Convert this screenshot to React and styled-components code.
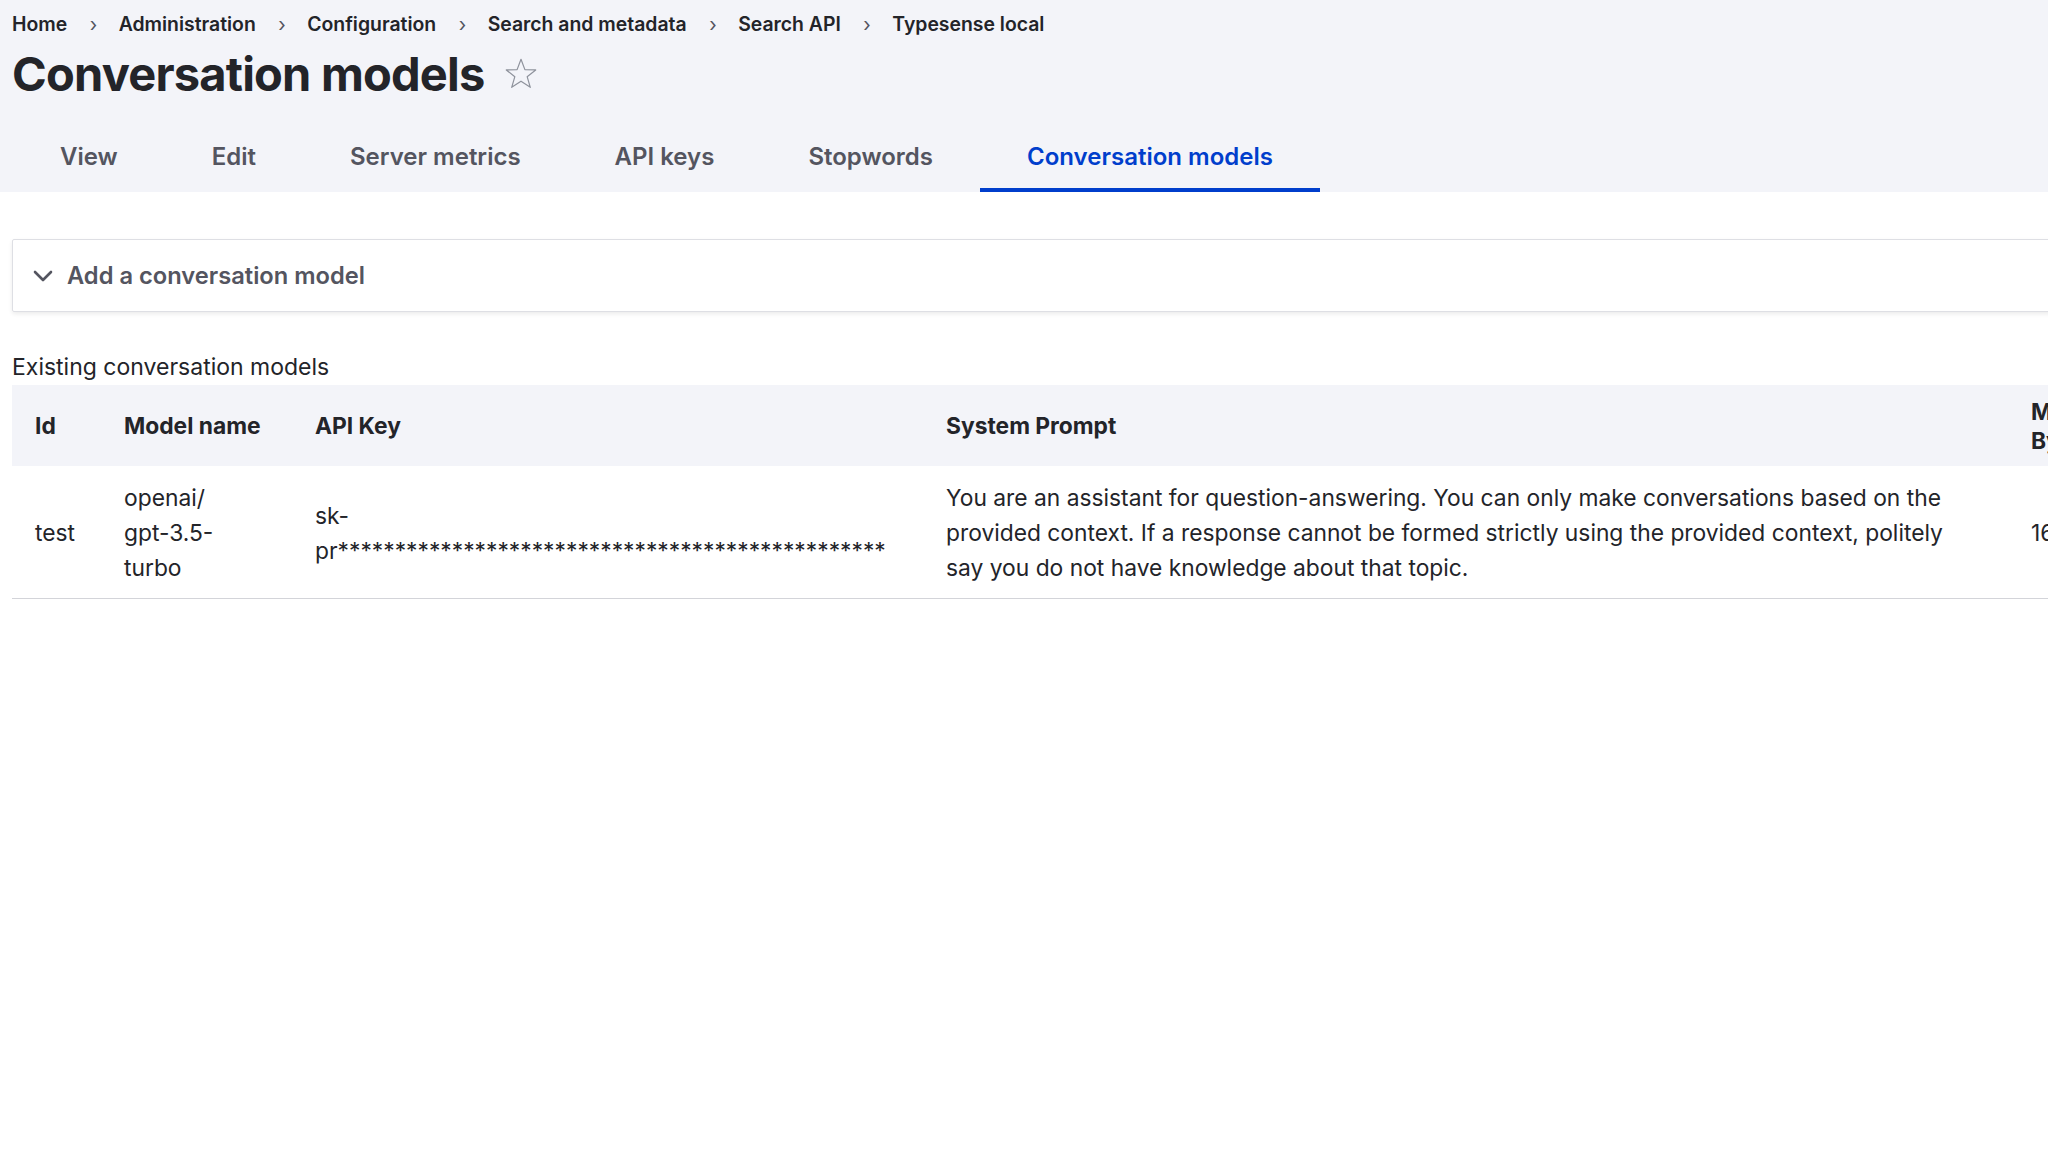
import React from 'react'
import styled, { createGlobalStyle } from 'styled-components'

const GlobalStyle = createGlobalStyle`
	html, body {
		margin: 0;
		padding: 0;
		background: #ffffff;
		overflow: hidden;
	}
	body {
		font-family: Inter, "Noto Sans", "Liberation Sans", sans-serif;
		color: #232429;
	}
`

const Page = styled.div`
	width: 2048px;
	height: 1152px;
	overflow: hidden;
	background: #ffffff;
`

const Header = styled.header`
	background: #f3f4f9;
	padding: 12px 0 0 12px;
	height: 192px;
	box-sizing: border-box;
`

const Crumbs = styled.nav`
	display: flex;
	align-items: center;
	font-size: 19.4px;
	line-height: 24px;
	font-weight: 600;
	color: #232429;
`

const Sep = styled.span`
	color: #545560;
	font-weight: 400;
	padding: 0 21.5px 0 22.5px;
`

const TitleRow = styled.div`
	display: flex;
	align-items: center;
	gap: 18px;
	margin-top: 10px;
`

const Title = styled.h1`
	margin: 0;
	font-size: 47px;
	line-height: 56px;
	font-weight: 700;
	letter-spacing: -0.8px;
	color: #232429;
`

const Tabs = styled.ul`
	display: flex;
	list-style: none;
	margin: 18px 0 0 1px;
	padding: 0;
`

const Tab = styled.li`
	padding: 4px 47px 0;
	height: 72px;
	box-sizing: border-box;
	display: flex;
	align-items: center;
	font-size: 24px;
	font-weight: 600;
	color: ${p => (p.active ? '#003ecc' : '#545560')};
	border-bottom: 4px solid ${p => (p.active ? '#003ecc' : 'transparent')};
`

const Main = styled.main`
	padding: 47px 0 0 12px;
`

const Details = styled.div`
	height: 73px;
	box-sizing: border-box;
	margin-right: -40px;
	border: 1px solid #dedfe4;
	box-shadow: 0 2px 4px rgba(0, 0, 0, 0.08);
	border-radius: 2px;
	display: flex;
	align-items: center;
	padding-left: 20px;
	gap: 14px;
	font-size: 23.7px;
	font-weight: 600;
	color: #545560;
`

const Caption = styled.div`
	margin-top: 38px;
	font-size: 23px;
	line-height: 35px;
	color: #232429;
`

const Table = styled.table`
	width: 2203px;
	table-layout: fixed;
	border-collapse: collapse;
	font-size: 22.8px;
	color: #232429;
`

const Th = styled.th`
	height: 81px;
	box-sizing: border-box;
	background: #f3f4f9;
	text-align: left;
	font-weight: 700;
	line-height: 29px;
	padding: 0 16px;
	vertical-align: middle;
	&:first-child {
		padding-left: 23px;
	}
`

const Td = styled.td`
	height: 132px;
	box-sizing: border-box;
	line-height: 35px;
	padding: 2px 16px 0;
	vertical-align: middle;
	border-bottom: 1px solid #d3d4d9;
	&:first-child {
		padding-left: 23px;
	}
`

const Line = styled.span`
	display: block;
	white-space: nowrap;
`

const Star = () => (
	<svg width="36" height="36" viewBox="0 0 24 24">
		<polygon
			points="12,2.2 14.6,9.1 21.8,9.3 16.1,13.8 18.2,20.9 12,16.8 5.8,20.9 7.9,13.8 2.2,9.3 9.4,9.1"
			fill="none"
			stroke="#8e929c"
			strokeWidth="0.8"
			strokeLinejoin="round"
		/>
	</svg>
)

const Chevron = () => (
	<svg width="20" height="12" viewBox="0 0 20 12">
		<path d="M2 2 L10 10 L18 2" fill="none" stroke="#545560" strokeWidth="2.6" strokeLinecap="round" strokeLinejoin="round" />
	</svg>
)

const crumbs = ['Home', 'Administration', 'Configuration', 'Search and metadata', 'Search API', 'Typesense local']
const tabs = ['View', 'Edit', 'Server metrics', 'API keys', 'Stopwords', 'Conversation models']

const App = () => (
	<Page>
		<GlobalStyle />
		<Header>
			<Crumbs>
				{crumbs.map((c, i) => (
					<React.Fragment key={c}>
						{i > 0 && <Sep>›</Sep>}
						<span>{c}</span>
					</React.Fragment>
				))}
			</Crumbs>
			<TitleRow>
				<Title>Conversation models</Title>
				<Star />
			</TitleRow>
			<Tabs>
				{tabs.map(t => (
					<Tab key={t} active={t === 'Conversation models'}>{t}</Tab>
				))}
			</Tabs>
		</Header>
		<Main>
			<Details>
				<Chevron />
				<span>Add a conversation model</span>
			</Details>
			<Caption>Existing conversation models</Caption>
			<Table>
				<colgroup>
					<col style={{ width: 96 }} />
					<col style={{ width: 191 }} />
					<col style={{ width: 631 }} />
					<col style={{ width: 1085 }} />
					<col style={{ width: 200 }} />
				</colgroup>
				<thead>
					<tr>
						<Th>Id</Th>
						<Th>Model name</Th>
						<Th>API Key</Th>
						<Th>System Prompt</Th>
						<Th>Max<br />Bytes</Th>
					</tr>
				</thead>
				<tbody>
					<tr>
						<Td>test</Td>
						<Td>
							<Line>openai/</Line>
							<Line>gpt-3.5-</Line>
							<Line>turbo</Line>
						</Td>
						<Td>
							<Line>sk-</Line>
							<Line>pr{'*'.repeat(48)}</Line>
						</Td>
						<Td>
							<Line>You are an assistant for question-answering. You can only make conversations based on the</Line>
							<Line>provided context. If a response cannot be formed strictly using the provided context, politely</Line>
							<Line>say you do not have knowledge about that topic.</Line>
						</Td>
						<Td>16384</Td>
					</tr>
				</tbody>
			</Table>
		</Main>
	</Page>
)

export default App
